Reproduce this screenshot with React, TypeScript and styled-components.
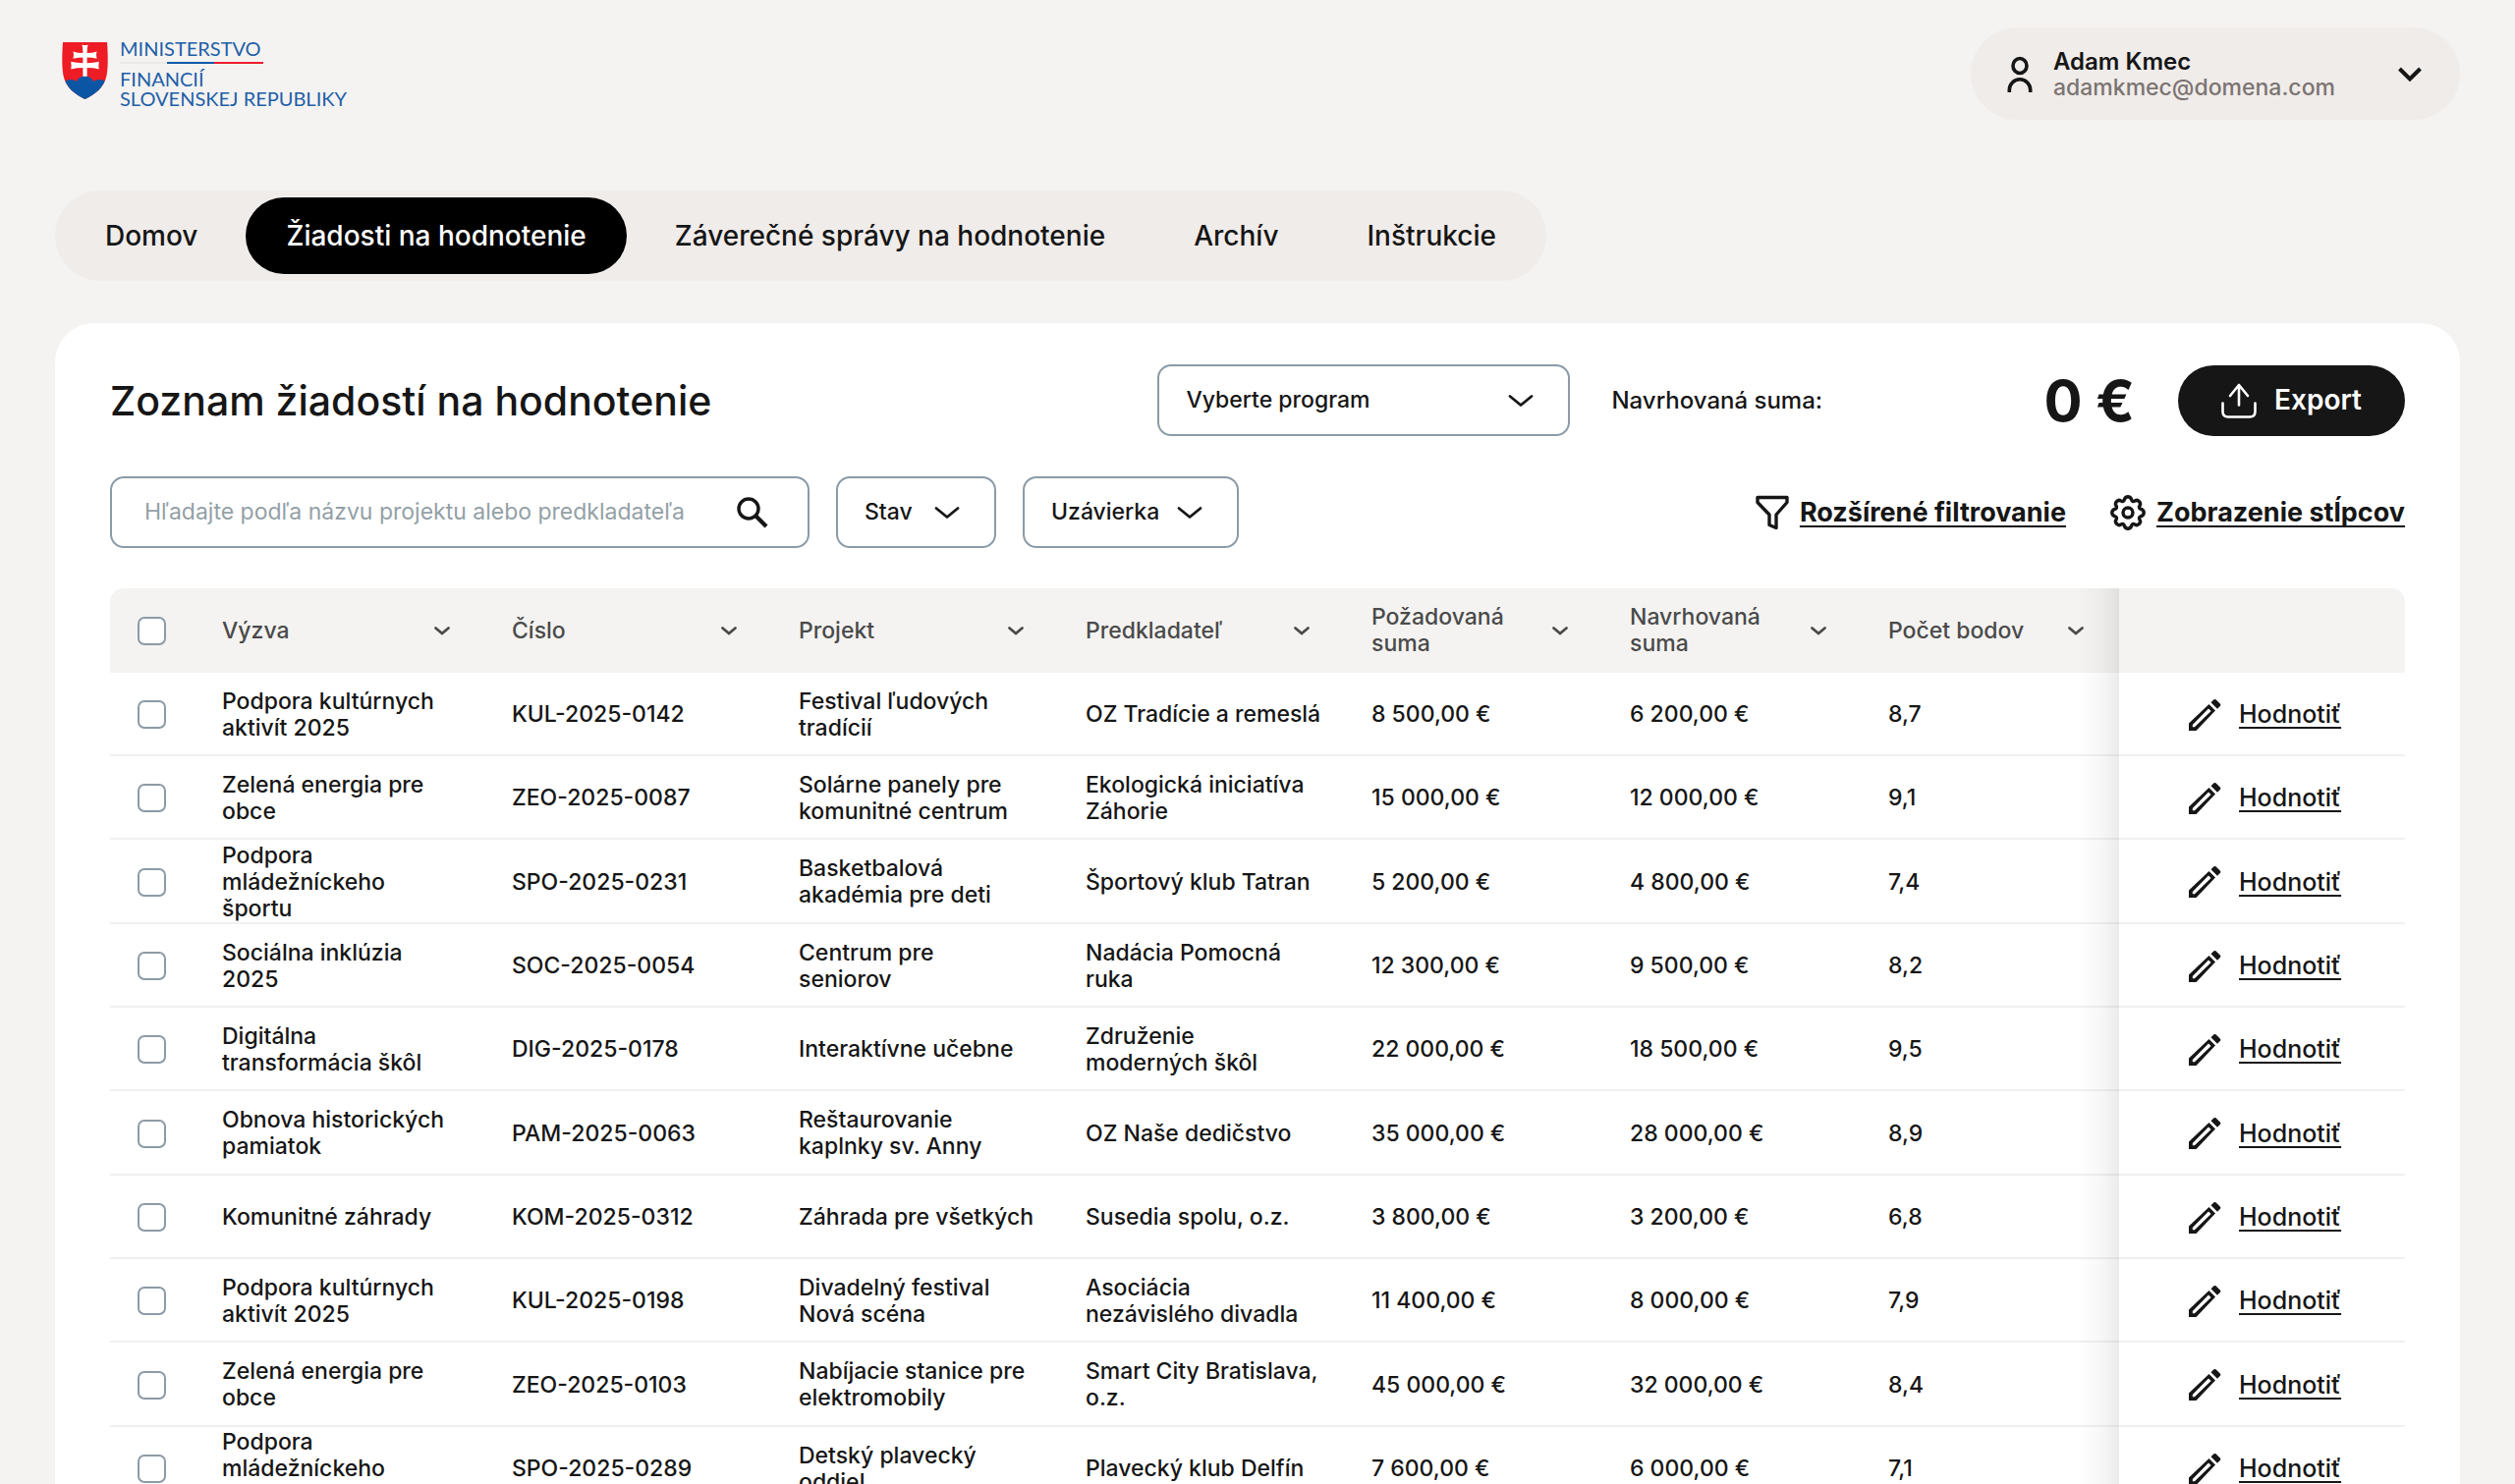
import React from "react";
import styled, { createGlobalStyle } from "styled-components";

const ink = "#161616";
const line = "#8b9ba7";
const sand = "#f0ecea";
const mist = "#f4f3f1";

const GlobalStyle = createGlobalStyle`
  *, *::before, *::after { box-sizing: border-box; }
  body {
    margin: 0;
    background: ${mist};
    color: ${ink};
    font-family: Inter, "Liberation Sans", sans-serif;
    font-size: 23px;
    line-height: 27px;
    font-weight: 500;
  }
  button, input, select { font: inherit; color: inherit; }
`;

const Page = styled.div`
  min-height: 100vh;
  padding: 28px 56px 0;
  display: flex;
  flex-direction: column;
`;

const TopBar = styled.header`
  display: flex;
  justify-content: space-between;
  align-items: flex-start;
`;

const Brand = styled.a`
  display: flex;
  align-items: flex-start;
  gap: 12px;
  padding: 11px 0 0 7px;
  color: #1f5fa8;
  text-decoration: none;
  font-family: Lato, sans-serif;
  font-size: 20px;
  line-height: 20px;
  font-weight: 400;
  > svg { margin-top: 4px; }
`;

const BrandText = styled.span`
  display: flex;
  flex-direction: column;
  align-items: flex-start;
`;

const Tricolor = styled.span`
  width: 146px;
  height: 2px;
  margin: 4px 0 5px;
  background: linear-gradient(to right, #ebe9e6 33%, #0b5aa8 33% 66%, #ee1c2e 66%);
`;

const UserButton = styled.button`
  display: flex;
  align-items: center;
  gap: 16px;
  width: 498px;
  height: 94px;
  padding: 2px 38px 0 32px;
  border: 0;
  border-radius: 47px;
  background: ${sand};
  text-align: left;
`;

const UserText = styled.span`
  display: flex;
  flex-direction: column;
  flex: 1;
`;

const UserName = styled.span`
  font-size: 24px;
  font-weight: 600;
`;

const UserMail = styled.span`
  color: #7c7472;
`;

const Nav = styled.nav`
  display: flex;
  align-self: flex-start;
  gap: 8px;
  margin-top: 72px;
  padding: 7px 10px;
  border-radius: 46px;
  background: ${sand};
`;

const NavLink = styled.a<{ $active?: boolean }>`
  padding: 0 41px;
  border-radius: 39px;
  font-size: 28px;
  line-height: 78px;
  text-decoration: none;
  white-space: nowrap;
  color: ${(p) => (p.$active ? "#ffffff" : ink)};
  background: ${(p) => (p.$active ? "#000000" : "transparent")};
`;

const Card = styled.main`
  flex: 1;
  margin-top: 43px;
  padding: 42px 56px 0;
  border-radius: 40px 40px 0 0;
  background: #ffffff;
`;

const Row = styled.div`
  display: flex;
  align-items: center;
`;

const FilterRow = styled(Row)`
  margin: 41px 0;
  gap: 27px;
`;

const Title = styled.h1`
  flex: 1;
  margin: 0;
  font-size: 41px;
  line-height: 52px;
  font-weight: 500;
`;

const SelectBox = styled.span<{ $w: number }>`
  display: grid;
  align-items: center;
  width: ${(p) => p.$w}px;
  > * { grid-area: 1 / 1; }
  > svg { justify-self: end; margin-right: 37px; pointer-events: none; }
`;

const Select = styled.select`
  appearance: none;
  width: 100%;
  height: 73px;
  padding: 0 27px;
  border: 2px solid ${line};
  border-radius: 14px;
  background: #ffffff;
`;

const SumLabel = styled.span`
  width: 440px;
  margin-left: 42px;
  font-size: 24px;
`;

const Sum = styled.output`
  font-size: 58px;
  line-height: 64px;
  font-weight: 700;
`;

const ExportButton = styled.button`
  display: flex;
  align-items: center;
  justify-content: center;
  gap: 18px;
  width: 231px;
  height: 72px;
  margin-left: 44px;
  border: 0;
  border-radius: 36px;
  background: ${ink};
  color: #ffffff;
  font-size: 28px;
  font-weight: 600;
`;

const SearchBox = styled.label`
  display: flex;
  align-items: center;
  width: 712px;
  height: 73px;
  padding: 0 40px 0 33px;
  border: 2px solid ${line};
  border-radius: 14px;
`;

const SearchInput = styled.input`
  flex: 1;
  min-width: 0;
  padding: 0;
  border: 0;
  outline: 0;
  background: transparent;
  font-weight: 400;
  &::placeholder { color: #93a0a6; opacity: 1; }
`;

const Links = styled.div`
  display: flex;
  gap: 45px;
  margin-left: auto;
`;

const ToolButton = styled.button`
  display: flex;
  align-items: center;
  gap: 11px;
  padding: 0;
  border: 0;
  background: transparent;
  font-size: 27px;
  line-height: 36px;
  font-weight: 700;
`;

const Underlined = styled.span`
  text-decoration: underline 2px;
  text-underline-offset: 4px;
  text-decoration-skip-ink: none;
`;

const Table = styled.table`
  width: 100%;
  table-layout: fixed;
  border-collapse: separate;
  border-spacing: 0;
`;

const Cell = styled.td`
  height: 85px;
  padding: 2px 0 0 27px;
  border-bottom: 2px solid #f1f0ee;
  white-space: pre-line;
  tr:nth-child(3n) > & { height: 86px; }
`;

const HeadCell = styled.th`
  height: 86px;
  padding: 0 27px;
  background: ${mist};
  color: #4a4a4a;
  font-weight: 500;
  text-align: left;
  &:first-child { border-top-left-radius: 14px; }
  &:last-child { border-top-right-radius: 14px; }
`;

const SortButton = styled.button`
  display: flex;
  align-items: center;
  justify-content: space-between;
  width: 100%;
  padding: 0;
  border: 0;
  background: transparent;
  text-align: left;
  white-space: pre-line;
`;

const edgeShadow = `
  position: sticky;
  right: 0;
  &::before {
    content: "";
    position: absolute;
    top: 0;
    bottom: 0;
    right: 100%;
    width: 44px;
    pointer-events: none;
    background: linear-gradient(to left, rgba(0,0,0,0.08), rgba(0,0,0,0.03) 40%, rgba(0,0,0,0));
  }
`;

const ActionHead = styled(HeadCell)`${edgeShadow}`;

const ActionCell = styled(Cell)`
  ${edgeShadow}
  padding-left: 70px;
  background: #ffffff;
  &::before { bottom: -2px; }
`;

const RateLink = styled.a`
  display: flex;
  align-items: center;
  gap: 18px;
  color: inherit;
  font-size: 25px;
  text-decoration: none;
`;

const Check = styled.input`
  appearance: none;
  display: block;
  width: 29px;
  height: 29px;
  margin: 0 1px;
  border: 2px solid ${line};
  border-radius: 7px;
  background: #ffffff;
  &:checked { background: ${ink}; }
`;

const Shield = () => (
  <svg width="47" height="58" viewBox="0 0 47 58" aria-hidden="true">
    <defs>
      <clipPath id="shield">
        <path d="M1 0H46C47 14 47 26 45.500 34C43 46 34 53 23.500 58C13 53 4 46 1.500 34C0 26 0 14 1 0Z" />
      </clipPath>
    </defs>
    <g clipPath="url(#shield)">
      <rect width="47" height="58" fill="#ee1c25" />
      <path
        d="M20.500 2.500Q23.500 3.500 26.500 2.500Q25.600 6 25.600 11Q31 11 35.500 9.500Q34.500 13 35.500 16.800Q31 15.500 25.600 15.500V21.200Q32 21.200 37.800 19.800Q37 23.500 37.800 27.400Q32 26 25.600 26V40H21.400V26Q15 26 9.200 27.400Q10 23.500 9.200 19.800Q15 21.200 21.400 21.200V15.500Q16 15.500 11.500 16.800Q12.500 13 11.500 9.500Q16 11 21.400 11Q21.400 6 20.500 2.500Z"
        fill="#fff"
      />
      <path d="M0 42C5 37 11 37 15 40C17 33 30 33 32 40C36 37 42 37 47 42V58H0Z" fill="#0b56a4" />
    </g>
  </svg>
);

const PersonIcon = () => (
  <svg width="36" height="40" viewBox="0 0 36 40" fill="none" stroke={ink} strokeWidth="3.600" aria-hidden="true">
    <ellipse cx="18" cy="11" rx="7" ry="7.500" />
    <path d="M7.300 38V35.500A10.700 10.700 0 0 1 28.700 35.500V38" />
  </svg>
);

const Chevron = () => (
  <svg width="26" height="14" viewBox="0 0 26 14" fill="none" stroke={ink} strokeWidth="2.800" strokeLinecap="round" strokeLinejoin="round" aria-hidden="true">
    <path d="M2 2.500L13 11.500L24 2.500" />
  </svg>
);

const UserChevron = () => (
  <svg width="26" height="18" viewBox="0 0 26 18" fill="none" stroke={ink} strokeWidth="4" aria-hidden="true">
    <path d="M2.500 3L13 13.500L23.500 3" />
  </svg>
);

const SortChevron = () => (
  <svg width="34" height="14" viewBox="0 0 34 14" fill="none" stroke="#4a4a4a" strokeWidth="2.800" strokeLinecap="round" aria-hidden="true">
    <path d="M10.500 4.500L17 10L23.500 4.500" />
  </svg>
);

const SearchIcon = () => (
  <svg width="32" height="32" viewBox="0 0 32 32" fill="none" stroke={ink} strokeWidth="3.400" aria-hidden="true">
    <circle cx="12" cy="12" r="10" />
    <path d="M19 19L30 30" strokeWidth="4.200" />
  </svg>
);

const ExportIcon = () => (
  <svg width="36" height="36" viewBox="0 0 36 36" fill="none" stroke="#fff" strokeWidth="2.600" strokeLinecap="round" strokeLinejoin="round" aria-hidden="true">
    <path d="M1.500 20.500V29Q1.500 34.500 7 34.500H29Q34.500 34.500 34.500 29V20.500" />
    <path d="M18 22.500V2M9 13L18 2L27 13" />
  </svg>
);

const FilterIcon = () => (
  <svg width="34" height="36" viewBox="0 0 34 36" fill="none" stroke={ink} strokeWidth="3.400" strokeLinejoin="round" aria-hidden="true">
    <path d="M2 2.500H32V7.500L21 20V33.500L14 30.500V20L2 7.500Z" />
  </svg>
);

const GearIcon = () => (
  <svg width="36" height="36" viewBox="0 0 24 24" fill="none" stroke={ink} strokeWidth="2.300" strokeLinejoin="round" aria-hidden="true">
    <path d="M12 1.200C13.500 1.200 14 1.900 14.400 3.100C14.800 4.300 15.600 4.600 16.700 4C17.900 3.300 18.700 3.400 19.600 4.400C20.600 5.300 20.700 6.100 20 7.300C19.400 8.400 19.700 9.200 20.900 9.600C22.100 10 22.800 10.500 22.800 12C22.800 13.500 22.100 14 20.900 14.400C19.700 14.800 19.400 15.600 20 16.700C20.700 17.900 20.600 18.700 19.600 19.600C18.700 20.600 17.900 20.700 16.700 20C15.600 19.400 14.800 19.700 14.400 20.900C14 22.100 13.500 22.800 12 22.800C10.500 22.800 10 22.100 9.600 20.900C9.200 19.700 8.400 19.400 7.300 20C6.100 20.700 5.300 20.600 4.400 19.600C3.400 18.700 3.300 17.900 4 16.700C4.600 15.600 4.300 14.800 3.100 14.400C1.900 14 1.200 13.500 1.200 12C1.200 10.500 1.900 10 3.100 9.600C4.300 9.200 4.600 8.400 4 7.300C3.300 6.100 3.400 5.300 4.400 4.400C5.300 3.400 6.100 3.300 7.300 4C8.400 4.600 9.200 4.300 9.600 3.100C10 1.900 10.500 1.200 12 1.200Z" />
    <circle cx="12" cy="12" r="3.300" />
  </svg>
);

const PencilIcon = () => (
  <svg width="34" height="34" viewBox="0 0 34 34" fill={ink} aria-hidden="true">
    <path fillRule="evenodd" d="M1 33V25.500L21.500 6L28 12.500L8.500 33ZM4.800 27V29.200H6.900L23.600 13L21 10.500Z" />
    <path d="M23.500 4.200L26.500 1.300Q27.500 .5 28.500 1.300L33 5.800Q33.800 6.800 33 7.800L30 10.700Z" />
  </svg>
);

const navItems = ["Domov", "Žiadosti na hodnotenie", "Záverečné správy na hodnotenie", "Archív", "Inštrukcie"];
const headings = ["Výzva", "Číslo", "Projekt", "Predkladateľ", "Požadovaná\nsuma", "Navrhovaná\nsuma", "Počet bodov"];
const columnWidths = [87, 295, 292, 292, 291, 263, 263, 262, 291];

const rows = [
  ["Podpora kultúrnych\naktivít 2025", "KUL-2025-0142", "Festival ľudových\ntradícií", "OZ Tradície a remeslá", "8 500,00 €", "6 200,00 €", "8,7"],
  ["Zelená energia pre\nobce", "ZEO-2025-0087", "Solárne panely pre\nkomunitné centrum", "Ekologická iniciatíva\nZáhorie", "15 000,00 €", "12 000,00 €", "9,1"],
  ["Podpora\nmládežníckeho\nšportu", "SPO-2025-0231", "Basketbalová\nakadémia pre deti", "Športový klub Tatran", "5 200,00 €", "4 800,00 €", "7,4"],
  ["Sociálna inklúzia\n2025", "SOC-2025-0054", "Centrum pre\nseniorov", "Nadácia Pomocná\nruka", "12 300,00 €", "9 500,00 €", "8,2"],
  ["Digitálna\ntransformácia škôl", "DIG-2025-0178", "Interaktívne učebne", "Združenie\nmoderných škôl", "22 000,00 €", "18 500,00 €", "9,5"],
  ["Obnova historických\npamiatok", "PAM-2025-0063", "Reštaurovanie\nkaplnky sv. Anny", "OZ Naše dedičstvo", "35 000,00 €", "28 000,00 €", "8,9"],
  ["Komunitné záhrady", "KOM-2025-0312", "Záhrada pre všetkých", "Susedia spolu, o.z.", "3 800,00 €", "3 200,00 €", "6,8"],
  ["Podpora kultúrnych\naktivít 2025", "KUL-2025-0198", "Divadelný festival\nNová scéna", "Asociácia\nnezávislého divadla", "11 400,00 €", "8 000,00 €", "7,9"],
  ["Zelená energia pre\nobce", "ZEO-2025-0103", "Nabíjacie stanice pre\nelektromobily", "Smart City Bratislava,\no.z.", "45 000,00 €", "32 000,00 €", "8,4"],
  ["Podpora\nmládežníckeho\nšportu", "SPO-2025-0289", "Detský plavecký\noddiel", "Plavecký klub Delfín", "7 600,00 €", "6 000,00 €", "7,1"],
];

export default function App() {
  return (
    <>
      <GlobalStyle />
      <Page>
        <TopBar>
          <Brand href="#">
            <Shield />
            <BrandText>
              <span>MINISTERSTVO</span>
              <Tricolor />
              <span>FINANCIÍ</span>
              <span>SLOVENSKEJ REPUBLIKY</span>
            </BrandText>
          </Brand>
          <UserButton type="button">
            <PersonIcon />
            <UserText>
              <UserName>Adam Kmec</UserName>
              <UserMail>adamkmec@domena.com</UserMail>
            </UserText>
            <UserChevron />
          </UserButton>
        </TopBar>

        <Nav>
          {navItems.map((item, i) => (
            <NavLink key={item} href="#" $active={i === 1}>
              {item}
            </NavLink>
          ))}
        </Nav>

        <Card>
          <Row>
            <Title>Zoznam žiadostí na hodnotenie</Title>
            <SelectBox $w={420}>
              <Select aria-label="Program">
                <option>Vyberte program</option>
              </Select>
              <Chevron />
            </SelectBox>
            <SumLabel>Navrhovaná suma:</SumLabel>
            <Sum>0 €</Sum>
            <ExportButton type="button">
              <ExportIcon />
              Export
            </ExportButton>
          </Row>

          <FilterRow>
            <SearchBox>
              <SearchInput type="text" aria-label="Hľadať" placeholder="Hľadajte podľa názvu projektu alebo predkladateľa" />
              <SearchIcon />
            </SearchBox>
            <SelectBox $w={163}>
              <Select aria-label="Stav">
                <option>Stav</option>
              </Select>
              <Chevron />
            </SelectBox>
            <SelectBox $w={220}>
              <Select aria-label="Uzávierka">
                <option>Uzávierka</option>
              </Select>
              <Chevron />
            </SelectBox>
            <Links>
              <ToolButton type="button">
                <FilterIcon />
                <Underlined>Rozšírené filtrovanie</Underlined>
              </ToolButton>
              <ToolButton type="button">
                <GearIcon />
                <Underlined>Zobrazenie stĺpcov</Underlined>
              </ToolButton>
            </Links>
          </FilterRow>

          <Table>
            <colgroup>
              {columnWidths.map((w, i) => (
                <col key={i} width={w} />
              ))}
            </colgroup>
            <thead>
              <tr>
                <HeadCell scope="col">
                  <Check type="checkbox" aria-label="Vybrať všetky" />
                </HeadCell>
                {headings.map((h) => (
                  <HeadCell key={h} scope="col">
                    <SortButton type="button">
                      <span>{h}</span>
                      <SortChevron />
                    </SortButton>
                  </HeadCell>
                ))}
                <ActionHead />
              </tr>
            </thead>
            <tbody>
              {rows.map((row) => (
                <tr key={row[1]}>
                  <Cell>
                    <Check type="checkbox" aria-label={`Vybrať ${row[1]}`} />
                  </Cell>
                  {row.map((text, i) => (
                    <Cell key={i}>{text}</Cell>
                  ))}
                  <ActionCell>
                    <RateLink href="#">
                      <PencilIcon />
                      <Underlined>Hodnotiť</Underlined>
                    </RateLink>
                  </ActionCell>
                </tr>
              ))}
            </tbody>
          </Table>
        </Card>
      </Page>
    </>
  );
}
